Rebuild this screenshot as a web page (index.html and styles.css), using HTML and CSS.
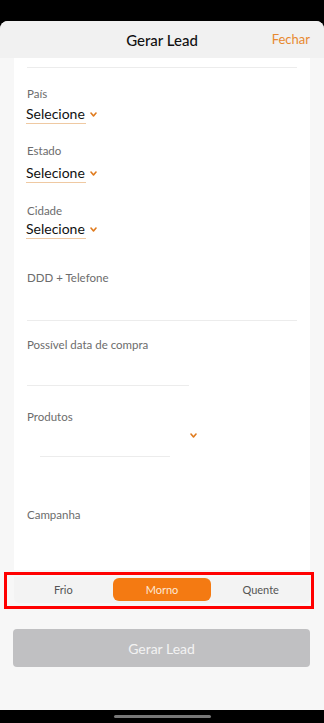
FILE: index.html
```html
<!DOCTYPE html>
<html lang="pt">
<head>
  <meta charset="UTF-8">
  <title>Gerar Lead</title>
  <link rel="stylesheet" href="styles.css">
</head>
<body>
  <div class="screen">
    <div class="status-bar"></div>

    <div class="sheet">
      <div class="header">
        <h1>Gerar Lead</h1>
        <span class="close">Fechar</span>
      </div>

      <div class="card">
        <div class="divider"></div>

        <div class="field field-pais">
          <label>País</label>
          <div class="select">Selecione <svg class="chevron" viewBox="0 0 7 5"><polyline points="1,1 3.5,4 6,1"/></svg></div>
        </div>

        <div class="field field-estado">
          <label>Estado</label>
          <div class="select">Selecione <svg class="chevron" viewBox="0 0 7 5"><polyline points="1,1 3.5,4 6,1"/></svg></div>
        </div>

        <div class="field field-cidade">
          <label>Cidade</label>
          <div class="select">Selecione <svg class="chevron" viewBox="0 0 7 5"><polyline points="1,1 3.5,4 6,1"/></svg></div>
        </div>

        <div class="field field-phone">
          <label>DDD + Telefone</label>
          <div class="input"></div>
        </div>

        <div class="field field-date">
          <label>Possível data de compra</label>
          <div class="input input-short"></div>
        </div>

        <div class="field field-produtos">
          <label>Produtos</label>
          <div class="product-select">
            <div class="product-line"></div>
            <svg class="chevron" viewBox="0 0 7 5"><polyline points="1,1 3.5,4 6,1"/></svg>
          </div>
        </div>

        <div class="field field-campanha">
          <label>Campanha</label>
        </div>
      </div>

      <div class="segment-area">
        <div class="segments">
          <button class="segment">Frio</button>
          <button class="segment active">Morno</button>
          <button class="segment">Quente</button>
        </div>
        <div class="highlight"></div>
      </div>

      <div class="actions">
        <button class="submit" disabled>Gerar Lead</button>
      </div>
    </div>

    <div class="nav-bar">
      <div class="home-indicator"></div>
    </div>
  </div>
</body>
</html>
```

FILE: styles.css
```css
body {
  margin: 0;
  background: #000;
  font-family: 'Lato', 'Noto Sans', sans-serif;
}

.screen {
  width: 324px;
  height: 723px;
  display: flex;
  flex-direction: column;
  background: #000;
}

.status-bar {
  height: 21px;
  flex-shrink: 0;
}

.sheet {
  flex: 1;
  display: flex;
  flex-direction: column;
  background: #f7f7f7;
  border-radius: 8px 8px 0 0;
  overflow: hidden;
}

.header {
  position: relative;
  height: 37px;
  flex-shrink: 0;
  background: #f1f1f1;
  display: flex;
  align-items: center;
  justify-content: center;
}

.header h1 {
  margin: 0;
  font-size: 15px;
  font-weight: 500;
  color: #111;
}

.close {
  position: absolute;
  right: 14px;
  top: 10px;
  font-size: 13px;
  color: #e8892f;
}

.card {
  height: 512px;
  margin: 0 14px;
  padding: 0 13px;
  background: #fff;
  box-sizing: border-box;
  flex-shrink: 0;
}

.divider {
  margin-top: 9px;
  height: 1px;
  background: #ececec;
}

.field label {
  display: block;
  font-size: 11.5px;
  line-height: 14px;
  color: #6c6c6c;
}

.select {
  display: inline-flex;
  align-items: center;
  font-size: 14px;
  line-height: 18px;
  color: #111;
  margin-left: -1px;
  border-bottom: 1px solid #efc9a2;
  white-space: nowrap;
}

.select .chevron {
  margin-left: 5px;
  margin-right: -11px;
}

.chevron {
  width: 7px;
  height: 5px;
  fill: none;
  stroke: #e07b1e;
  stroke-width: 1.6;
  stroke-linecap: round;
  stroke-linejoin: round;
}

.field-pais { margin-top: 19px; }
.field-pais .select { margin-top: 4px; }

.field-estado { margin-top: 20px; }
.field-estado .select { margin-top: 6px; }

.field-cidade { margin-top: 21px; }
.field-cidade .select { margin-top: 2px; }

.field-phone { margin-top: 32px; }

.input {
  height: 35px;
  border-bottom: 1px solid #ececec;
}

.input-short {
  width: 162px;
  height: 33px;
}

.field-date { margin-top: 17px; }

.field-produtos { margin-top: 24px; }

.product-select {
  position: relative;
  height: 33px;
}

.product-line {
  position: absolute;
  left: 13px;
  bottom: 0;
  width: 130px;
  height: 1px;
  background: #ececec;
}

.product-select .chevron {
  position: absolute;
  left: 163px;
  top: 9px;
}

.field-campanha { margin-top: 51px; }

.segment-area {
  position: relative;
  padding: 7px 14px 0;
  flex-shrink: 0;
}

.segments {
  display: flex;
  height: 26px;
  padding: 1px 0 2px;
  box-sizing: border-box;
  background: #f3f3f3;
  border-radius: 0 0 5px 5px;
}

.segment {
  flex: 1;
  border: none;
  background: none;
  font-family: inherit;
  font-size: 11px;
  color: #555;
  border-radius: 6px;
  padding: 0;
}

.segment.active {
  background: #f47a12;
  color: #fde8d6;
}

.highlight {
  position: absolute;
  left: 4px;
  right: 10px;
  top: 2px;
  height: 37px;
  border: 3px solid #ff0000;
  box-sizing: border-box;
}

.actions {
  padding: 26px 14px 0 13px;
}

.submit {
  width: 100%;
  height: 38px;
  border: none;
  border-radius: 4px;
  background: #c0c0c2;
  color: #f3f3f3;
  font-family: inherit;
  font-size: 14px;
}

.nav-bar {
  height: 13px;
  flex-shrink: 0;
  display: flex;
  justify-content: center;
  padding-top: 5px;
  box-sizing: border-box;
}

.home-indicator {
  width: 97px;
  height: 3px;
  border-radius: 2px;
  background: #777;
}
```
